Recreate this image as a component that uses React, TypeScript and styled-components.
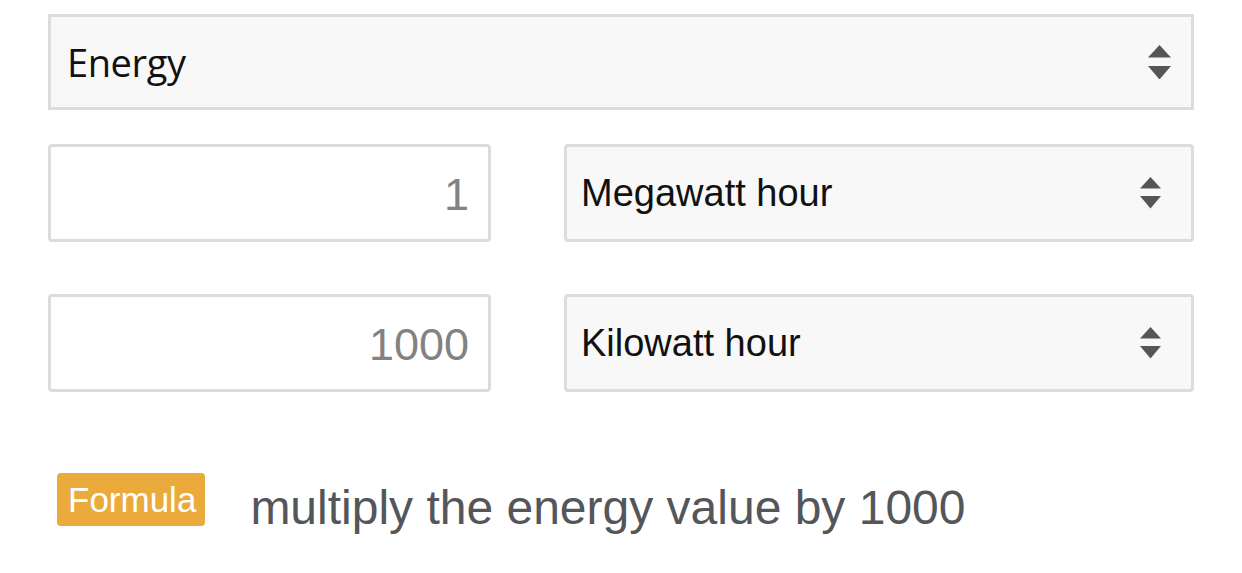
import React from 'react';
import styled, { createGlobalStyle } from 'styled-components';

const GlobalStyle = createGlobalStyle`
  body {
    margin: 0;
    background: #ffffff;
    font-family: 'Liberation Sans', Arial, sans-serif;
  }
`;

const Page = styled.div`
  padding: 14px 48px 0 48px;
  display: flex;
  flex-direction: column;
`;

interface SelectBoxProps {
  $square?: boolean;
  $height: number;
}

const SelectBox = styled.div<SelectBoxProps>`
  display: flex;
  align-items: center;
  justify-content: space-between;
  box-sizing: border-box;
  height: ${(props) => props.$height}px;
  border: 3px solid #dcdcdc;
  border-radius: ${(props) => (props.$square ? '0' : '4px')};
  background-color: #f8f8f8;
  padding: 0 30px 0 14px;
  font-size: 38px;
  color: #111111;
  user-select: none;
`;

const CategoryBox = styled(SelectBox)`
  padding: 0 20px 0 16px;
  font-family: 'Open Sans', 'Liberation Sans', sans-serif;
  font-size: 38px;
  letter-spacing: -0.4px;
`;

const Rows = styled.div`
  display: flex;
  flex-direction: column;
  gap: 52px;
  margin-top: 34px;
`;

const Row = styled.div`
  display: grid;
  grid-template-columns: 443px 1fr;
  column-gap: 73px;
`;

const ValueInput = styled.input`
  box-sizing: border-box;
  width: 100%;
  height: 98px;
  border: 3px solid #dcdcdc;
  border-radius: 4px;
  background: #ffffff;
  padding: 4px 19px 0 15px;
  text-align: right;
  font-family: 'Liberation Sans', Arial, sans-serif;
  font-size: 45px;
  font-weight: 300;
  color: #828282;
  outline: none;
`;

const FormulaRow = styled.div`
  display: flex;
  align-items: flex-start;
  gap: 45px;
  margin-top: 81px;
  padding-left: 9px;
`;

const Badge = styled.span`
  display: inline-flex;
  align-items: center;
  box-sizing: border-box;
  height: 53px;
  padding: 1px 9px 0 11px;
  border-radius: 4px;
  background-color: #eaaa3c;
  color: #ffffff;
  font-size: 35px;
`;

const FormulaText = styled.span`
  font-size: 48px;
  color: #54565a;
  padding-top: 7px;
`;

const ArrowIcon: React.FC<{ size: number }> = ({ size }) => (
  <svg width={size} height={size * 1.5} viewBox="0 0 22 33" aria-hidden>
    <polygon points="11,0 22,12 0,12" fill="#555555" />
    <polygon points="0,20 22,20 11,33" fill="#555555" />
  </svg>
);

interface UnitRowProps {
  value: string;
  unit: string;
}

const UnitRow: React.FC<UnitRowProps> = ({ value, unit }) => (
  <Row>
    <ValueInput type="text" value={value} readOnly />
    <SelectBox $height={98}>
      {unit}
      <ArrowIcon size={21} />
    </SelectBox>
  </Row>
);

export default function App() {
  return (
    <>
      <GlobalStyle />
      <Page>
        <CategoryBox $square $height={96}>
          Energy
          <ArrowIcon size={23} />
        </CategoryBox>
        <Rows>
          <UnitRow value="1" unit="Megawatt hour" />
          <UnitRow value="1000" unit="Kilowatt hour" />
        </Rows>
        <FormulaRow>
          <Badge>Formula</Badge>
          <FormulaText>multiply the energy value by 1000</FormulaText>
        </FormulaRow>
      </Page>
    </>
  );
}
